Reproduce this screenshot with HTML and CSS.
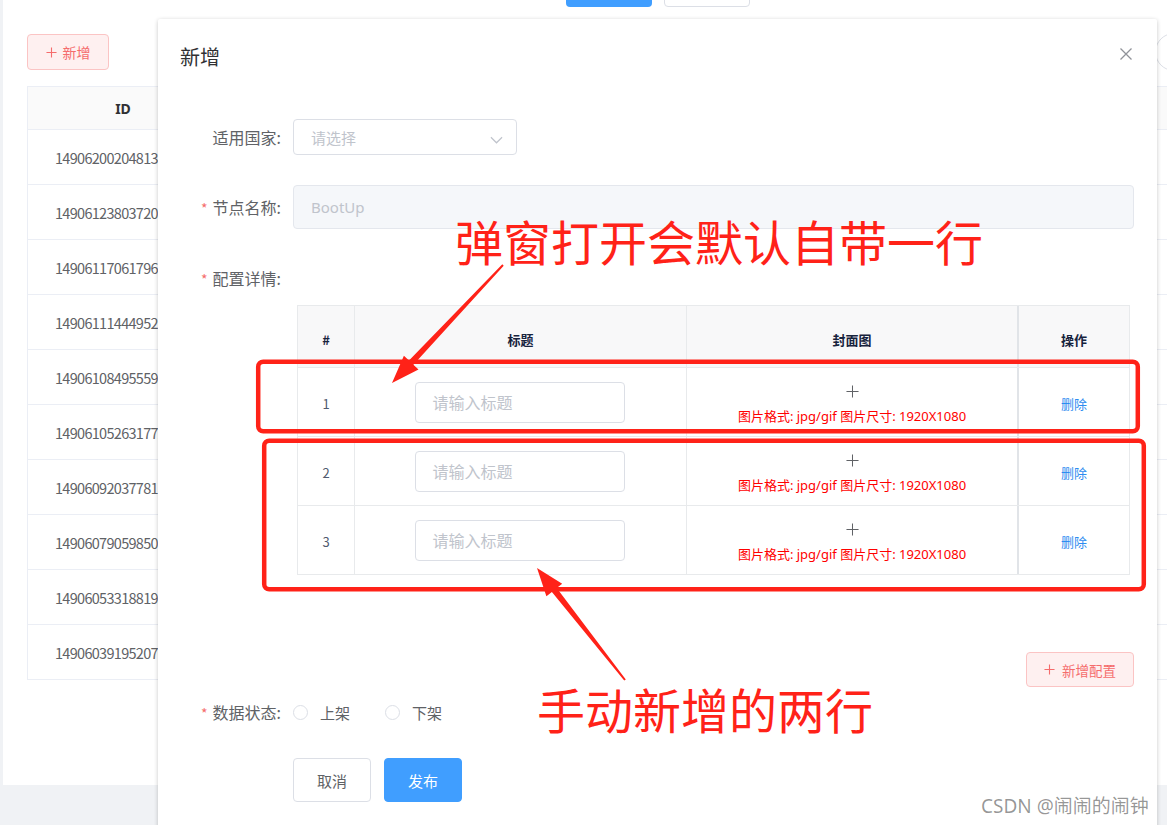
FILE: index.html
```html
<!DOCTYPE html>
<html lang="zh-CN">
<head>
<meta charset="utf-8">
<title>新增</title>
<link rel="stylesheet" href="styles.css">
</head>
<body>
<div class="app">
  <div class="page">
    <div class="topbar">
      <span class="top-btn primary"></span>
      <span class="top-btn plain"></span>
    </div>
    <div class="toolbar">
      <button class="add-btn"><svg class="plus-ico" viewBox="0 0 12 12"><path d="M6 0.5V11.5M0.5 6H11.5"/></svg>新增</button>
      <span class="circle-btn"><span class="dot"></span></span>
    </div>
    <div class="list">
      <div class="list-row list-head"><div class="id-cell">ID</div></div>
      <div class="list-row"><div class="id-cell">1490620020481345537</div></div>
      <div class="list-row"><div class="id-cell">1490612380372054018</div></div>
      <div class="list-row"><div class="id-cell">1490611706179629057</div></div>
      <div class="list-row"><div class="id-cell">1490611144495210498</div></div>
      <div class="list-row"><div class="id-cell">1490610849555959809</div></div>
      <div class="list-row"><div class="id-cell">1490610526317723649</div></div>
      <div class="list-row"><div class="id-cell">1490609203778179073</div></div>
      <div class="list-row"><div class="id-cell">1490607905985019906</div></div>
      <div class="list-row"><div class="id-cell">1490605331881934850</div></div>
      <div class="list-row"><div class="id-cell">1490603919520768002</div></div>
    </div>
  </div>
</div>

<div class="dialog">
  <div class="dialog-header">
    <span class="dialog-title">新增</span>
    <svg class="close-ico" viewBox="0 0 12 12"><path d="M0.5 0.5L11.5 11.5M11.5 0.5L0.5 11.5"/></svg>
  </div>
  <div class="form">
    <div class="form-item item-country">
      <div class="form-label"><span class="label-text">适用国家:</span></div>
      <div class="form-content">
        <div class="select">
          <span class="placeholder">请选择</span>
          <svg class="chevron" viewBox="0 0 14 8"><path d="M1 1L7 7L13 1"/></svg>
        </div>
      </div>
    </div>
    <div class="form-item item-name">
      <div class="form-label"><span class="req">*</span><span class="label-text">节点名称:</span></div>
      <div class="form-content">
        <div class="input disabled">BootUp</div>
      </div>
    </div>
    <div class="form-item item-config">
      <div class="form-label"><span class="req">*</span><span class="label-text">配置详情:</span></div>
      <div class="form-content config-content">
        <div class="cfg-table">
          <div class="cfg-row cfg-head">
            <div class="cfg-cell">#</div>
            <div class="cfg-cell">标题</div>
            <div class="cfg-cell">封面图</div>
            <div class="cfg-cell op">操作</div>
          </div>
          <div class="cfg-row">
            <div class="cfg-cell num">1</div>
            <div class="cfg-cell"><div class="title-input">请输入标题</div></div>
            <div class="cfg-cell cover">
              <svg class="cover-plus" viewBox="0 0 14 14"><path d="M7 0.5V13.5M0.5 7H13.5"/></svg>
              <span class="cover-tip">图片格式: jpg/gif 图片尺寸: 1920X1080</span>
            </div>
            <div class="cfg-cell op"><a class="link">删除</a></div>
          </div>
          <div class="cfg-row">
            <div class="cfg-cell num">2</div>
            <div class="cfg-cell"><div class="title-input">请输入标题</div></div>
            <div class="cfg-cell cover">
              <svg class="cover-plus" viewBox="0 0 14 14"><path d="M7 0.5V13.5M0.5 7H13.5"/></svg>
              <span class="cover-tip">图片格式: jpg/gif 图片尺寸: 1920X1080</span>
            </div>
            <div class="cfg-cell op"><a class="link">删除</a></div>
          </div>
          <div class="cfg-row last">
            <div class="cfg-cell num">3</div>
            <div class="cfg-cell"><div class="title-input">请输入标题</div></div>
            <div class="cfg-cell cover">
              <svg class="cover-plus" viewBox="0 0 14 14"><path d="M7 0.5V13.5M0.5 7H13.5"/></svg>
              <span class="cover-tip">图片格式: jpg/gif 图片尺寸: 1920X1080</span>
            </div>
            <div class="cfg-cell op"><a class="link">删除</a></div>
          </div>
        </div>
        <div class="add-cfg-wrap">
          <button class="add-btn add-cfg"><svg class="plus-ico" viewBox="0 0 12 12"><path d="M6 0.5V11.5M0.5 6H11.5"/></svg>新增配置</button>
        </div>
      </div>
    </div>
    <div class="form-item item-status">
      <div class="form-label"><span class="req">*</span><span class="label-text">数据状态:</span></div>
      <div class="form-content radios">
        <span class="radio"><span class="radio-dot"></span>上架</span>
        <span class="radio"><span class="radio-dot"></span>下架</span>
      </div>
    </div>
    <div class="form-item item-actions">
      <div class="form-label"></div>
      <div class="form-content actions">
        <button class="btn">取消</button>
        <button class="btn btn-primary">发布</button>
      </div>
    </div>
  </div>
</div>

<svg class="anno" viewBox="0 0 1167 825" width="1167" height="825">
  <rect x="258.2" y="361.7" width="879.6" height="69.6" rx="5" ry="5" class="box"/>
  <rect x="264.2" y="440.7" width="879.6" height="148.6" rx="5" ry="5" class="box"/>
  <polygon class="arrow" points="503.7,265.7 413.4,364.7 418.5,369.5 392,383 403.9,355.7 409,360.5 502.3,264.3"/>
  <polygon class="arrow" points="625.8,679.4 556.7,588.1 562.2,583.8 537,568 546.4,596.2 551.9,591.9 624.2,680.6"/>
</svg>
<div class="anno-text t1">弹窗打开会默认自带一行</div>
<div class="anno-text t2">手动新增的两行</div>
<div class="watermark">CSDN @闹闹的闹钟</div>
</body>
</html>
```

FILE: styles.css
```css
* { box-sizing: border-box; }
html, body {
  margin: 0;
  padding: 0;
  width: 1167px;
  height: 825px;
  overflow: hidden;
}
body {
  background: #f0f2f5;
  font-family: "Noto Sans", "Noto Sans CJK SC", sans-serif;
  color: #606266;
  position: relative;
}
button {
  font-family: inherit;
  cursor: pointer;
}

/* background page */
.app {
  padding-left: 3px;
}
.page {
  background: #fff;
  height: 785px;
  overflow: hidden;
}
.topbar {
  height: 7px;
  display: flex;
  align-items: flex-end;
  gap: 12px;
  padding-left: 563px;
}
.top-btn {
  display: block;
  width: 86px;
  height: 32px;
  flex: none;
  border-radius: 4px;
}
.top-btn.primary { background: #409eff; }
.top-btn.plain { background: #fff; border: 1px solid #dcdfe6; }

.toolbar {
  margin-top: 27px;
  padding-left: 24px;
  height: 36px;
  display: flex;
  align-items: center;
  justify-content: space-between;
}
.add-btn {
  height: 36px;
  width: 82px;
  padding: 0;
  border: 1px solid #fbc4c4;
  background: #fef0f0;
  color: #f56c6c;
  font-size: 14px;
  font-family: "Noto Sans CJK SC", sans-serif;
  border-radius: 4px;
  display: flex;
  align-items: center;
  justify-content: center;
}
.plus-ico {
  width: 11px;
  height: 11px;
  margin-right: 6px;
  fill: none;
  stroke: #f56c6c;
  stroke-width: 1.2;
}
.circle-btn {
  width: 38px;
  height: 38px;
  border: 1px solid #dcdfe6;
  border-radius: 50%;
  margin-right: -26px;
  display: flex;
  align-items: center;
  justify-content: flex-end;
  padding-right: 12px;
}
.circle-btn .dot {
  width: 3px;
  height: 3px;
  background: #e6a23c;
  border-radius: 50%;
}
.list {
  margin-top: 16px;
  margin-left: 24px;
  border-left: 1px solid #ebeef5;
  border-top: 1px solid #ebeef5;
}
.list-row {
  height: 55px;
  border-bottom: 1px solid #ebeef5;
  display: flex;
  align-items: center;
  font-size: 14.5px;
  color: #606266;
  font-family: "Noto Sans CJK SC", sans-serif;
  letter-spacing: -0.7px;
}
.list-head {
  height: 43px;
  background: #fafafa;
  font-weight: 700;
  color: #303133;
  font-family: "Noto Sans", sans-serif;
  font-size: 14px;
  letter-spacing: 0;
}
.id-cell {
  width: 190px;
  padding-left: 27px;
  white-space: nowrap;
}
.list-head .id-cell {
  padding-left: 0;
  text-align: center;
}

/* dialog */
.dialog {
  position: absolute;
  left: 158px;
  top: 19px;
  width: 999px;
  height: 830px;
  background: #fff;
  border-radius: 2px;
  box-shadow: 0 1px 4px rgba(0, 0, 0, 0.22);
}
.dialog-header {
  position: relative;
  padding: 26px 20px 0 22px;
  height: 50px;
}
.dialog-title {
  display: block;
  font-family: "Noto Sans CJK SC", sans-serif;
  font-size: 20px;
  line-height: 24px;
  color: #303133;
}
.close-ico {
  position: absolute;
  top: 29px;
  right: 25px;
  width: 12px;
  height: 12px;
  fill: none;
  stroke: #909399;
  stroke-width: 1.3;
}
.form {
  padding: 50px 23px 0 35px;
}
.form-item {
  display: flex;
  align-items: center;
}
.form-label {
  width: 100px;
  height: 40px;
  flex: none;
  display: flex;
  align-items: center;
  justify-content: flex-end;
  padding-right: 12px;
  font-size: 16px;
  color: #606266;
  font-family: "Noto Sans CJK SC", sans-serif;
  white-space: nowrap;
}
.label-text {
  line-height: 20px;
}
.req {
  color: #f56c6c;
  margin-right: 5px;
  font-size: 14px;
  line-height: 14px;
  padding-top: 2px;
}
.form-content {
  flex: 1;
  min-width: 0;
}
.item-country { height: 36px; }
.item-name { margin-top: 30px; height: 44px; }
.item-config { margin-top: 29px; align-items: flex-start; }
.item-status { margin-top: 5px; height: 40px; }
.item-actions { margin-top: 26px; }

.select {
  width: 224px;
  height: 36px;
  border: 1px solid #dcdfe6;
  border-radius: 4px;
  display: flex;
  align-items: center;
  justify-content: space-between;
  padding: 0 13px 0 17px;
  font-size: 15px;
}
.placeholder {
  color: #c0c4cc;
  font-family: "Noto Sans CJK SC", sans-serif;
}
.chevron {
  width: 13px;
  height: 8px;
  margin-top: 6px;
  fill: none;
  stroke: #c0c4cc;
  stroke-width: 1.3;
}
.input {
  height: 44px;
  border: 1px solid #e4e7ed;
  border-radius: 4px;
  padding-left: 17px;
  display: flex;
  align-items: center;
  font-size: 15px;
}
.input.disabled {
  background: #f5f7fa;
  color: #c0c4cc;
}

.config-content {
  padding-top: 47px;
}
.cfg-table {
  margin: 0 4px;
  border: 1px solid #e8eaec;
}
.cfg-row {
  display: grid;
  grid-template-columns: 56px 332px 331px 1fr;
  height: 69px;
  border-bottom: 1px solid #e8eaec;
}
.cfg-row.last { border-bottom: none; height: 68px; }
.cfg-head {
  height: 62px;
  background: #f8f8f9;
}
.cfg-cell {
  display: flex;
  align-items: center;
  justify-content: center;
  font-size: 13px;
  color: #515a6e;
  font-family: "Noto Sans CJK SC", sans-serif;
}
.cfg-cell + .cfg-cell {
  border-left: 1px solid #e8eaec;
}
.cfg-cell.op {
  border-left: 2px solid #e1e4e8;
}
.cfg-head .cfg-cell {
  font-weight: 700;
  color: #17233d;
  padding-top: 5px;
}
.cfg-row .num {
  padding-top: 2px;
}
.title-input {
  width: 210px;
  height: 41px;
  border: 1px solid #dcdfe6;
  border-radius: 4px;
  padding-left: 17px;
  display: flex;
  align-items: center;
  color: #c0c4cc;
  font-size: 16px;
  margin-right: 2px;
}
.cover {
  flex-direction: column;
  gap: 10px;
  padding-top: 4px;
}
.cover-plus {
  width: 13px;
  height: 13px;
  fill: none;
  stroke: #606266;
  stroke-width: 1.1;
}
.cover-tip {
  color: #ff0000;
  font-size: 13px;
  line-height: 16px;
  font-family: "Noto Sans", "Noto Sans CJK SC", sans-serif;
  white-space: nowrap;
}
.link {
  color: #2d8cf0;
  font-size: 13px;
  padding-top: 2px;
}
.add-cfg-wrap {
  display: flex;
  justify-content: flex-end;
  margin-top: 77px;
}
.add-cfg {
  width: 108px;
  height: 35px;
  font-size: 13.5px;
}
.add-cfg .plus-ico { margin-right: 7px; }

.radios {
  display: flex;
  align-items: center;
  gap: 35px;
  font-size: 15px;
  font-family: "Noto Sans CJK SC", sans-serif;
  color: #606266;
}
.radio {
  display: flex;
  align-items: center;
}
.radio-dot {
  width: 15px;
  height: 15px;
  border: 1px solid #dcdfe6;
  border-radius: 50%;
  margin-right: 12px;
}
.actions {
  display: flex;
  gap: 13px;
}
.btn {
  width: 78px;
  height: 44px;
  border: 1px solid #dcdfe6;
  background: #fff;
  border-radius: 4px;
  color: #606266;
  font-size: 15px;
  font-family: "Noto Sans CJK SC", sans-serif;
}
.btn-primary {
  background: #409eff;
  border-color: #409eff;
  color: #fff;
}

/* annotations */
.anno {
  position: absolute;
  left: 0;
  top: 0;
  pointer-events: none;
}
.anno .box {
  fill: none;
  stroke: #ff2218;
  stroke-width: 4.5;
}
.anno .arrow {
  fill: #ff2218;
}
.anno-text {
  position: absolute;
  color: #ff2218;
  font-family: "Noto Sans CJK SC", sans-serif;
  font-size: 48px;
  line-height: 48px;
  white-space: nowrap;
}
.t1 { left: 455px; top: 216px; }
.t2 { left: 537px; top: 684px; }
.watermark {
  position: absolute;
  left: 981px;
  top: 794px;
  font-size: 19px;
  line-height: 24px;
  color: rgba(0, 0, 0, 0.42);
  text-shadow: 1px 1px 1px rgba(255, 255, 255, 0.9);
  font-family: "Noto Sans", "Noto Sans CJK SC", sans-serif;
  white-space: nowrap;
}
```
